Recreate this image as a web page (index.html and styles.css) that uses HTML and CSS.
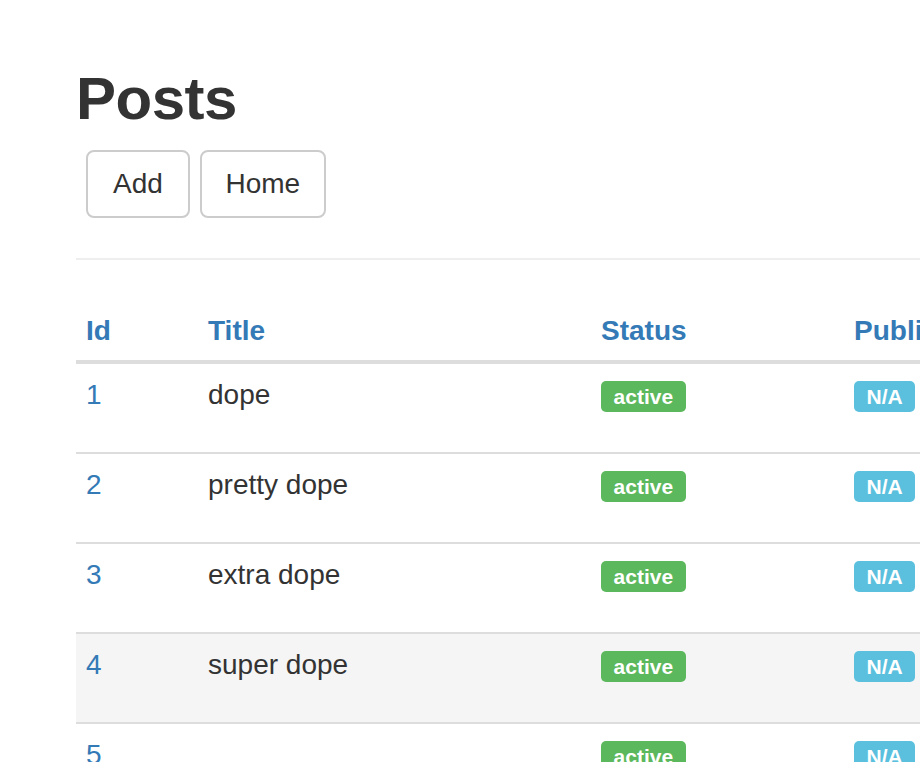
FILE: index.html
```html
<!DOCTYPE html>
<html lang="en">
<head>
<meta charset="utf-8">
<title>Posts</title>
<link rel="stylesheet" href="styles.css">
</head>
<body>
<div class="page">
  <h1 class="title">Posts</h1>
  <div class="actions">
    <a class="btn" href="#">Add</a>
    <a class="btn" href="#">Home</a>
  </div>
  <hr class="rule">
  <table class="table">
    <colgroup>
      <col class="c-id">
      <col class="c-title">
      <col class="c-status">
      <col class="c-pub">
      <col class="c-act">
    </colgroup>
    <thead>
      <tr>
        <th><a href="#">Id</a></th>
        <th><a href="#">Title</a></th>
        <th><a href="#">Status</a></th>
        <th><a href="#">Published</a></th>
        <th></th>
      </tr>
    </thead>
    <tbody>
      <tr>
        <td><a href="#">1</a></td>
        <td>dope</td>
        <td><span class="label label-success">active</span></td>
        <td><span class="label label-info">N/A</span></td>
        <td></td>
      </tr>
      <tr>
        <td><a href="#">2</a></td>
        <td>pretty dope</td>
        <td><span class="label label-success">active</span></td>
        <td><span class="label label-info">N/A</span></td>
        <td></td>
      </tr>
      <tr>
        <td><a href="#">3</a></td>
        <td>extra dope</td>
        <td><span class="label label-success">active</span></td>
        <td><span class="label label-info">N/A</span></td>
        <td></td>
      </tr>
      <tr class="is-hover">
        <td><a href="#">4</a></td>
        <td>super dope</td>
        <td><span class="label label-success">active</span></td>
        <td><span class="label label-info">N/A</span></td>
        <td></td>
      </tr>
      <tr>
        <td><a href="#">5</a></td>
        <td></td>
        <td><span class="label label-success">active</span></td>
        <td><span class="label label-info">N/A</span></td>
        <td></td>
      </tr>
    </tbody>
  </table>
</div>
</body>
</html>
```
FILE: styles.css
```css
html, body {
  margin: 0;
  padding: 0;
  overflow: hidden;
  background: #fff;
}

body {
  font-family: "Liberation Sans", Arial, Helvetica, sans-serif;
  font-size: 28px;
  line-height: 40px;
  color: #333;
}

a {
  color: #337ab7;
  text-decoration: none;
}

.page {
  width: 1300px;
  padding: 66px 0 0 76px;
}

.title {
  margin: 0;
  font-size: 60px;
  line-height: 66px;
  font-weight: 700;
  color: #333;
  letter-spacing: -0.5px;
}

.actions {
  display: flex;
  gap: 10px;
  margin: 18px 0 0 10px;
}

.btn {
  display: block;
  box-sizing: border-box;
  min-width: 104px;
  height: 68px;
  line-height: 64px;
  padding: 0 23.5px;
  text-align: center;
  border: 2px solid #ccc;
  border-radius: 8px;
  color: #333;
  background: #fff;
  font-size: 28px;
}

.rule {
  margin: 40px 0 0;
  border: 0;
  border-top: 2px solid #eee;
  height: 0;
}

.table {
  margin-top: 35px;
  width: 1224px;
  table-layout: fixed;
  border-collapse: separate;
  border-spacing: 0;
}

.c-id { width: 122px; }
.c-title { width: 393px; }
.c-status { width: 253px; }
.c-pub { width: 253px; }

.table th {
  text-align: left;
  vertical-align: bottom;
  font-weight: 700;
  padding: 16px 10px 9px;
  line-height: 40px;
  border-bottom: 4px solid #ddd;
}

.table td {
  vertical-align: top;
  padding: 11px 10px 37px;
  line-height: 40px;
  border-top: 2px solid #ddd;
}

.table tbody tr:first-child td {
  border-top: 0;
}

.table tr.is-hover td {
  background: #f5f5f5;
}

.label {
  display: inline;
  font-size: 21px;
  font-weight: 700;
  line-height: 1;
  color: #fff;
  padding: 4px 12.6px 3.5px;
  border-radius: 5px;
  white-space: nowrap;
}

.label-success { background: #5cb85c; }
.label-info { background: #5bc0de; }
```
